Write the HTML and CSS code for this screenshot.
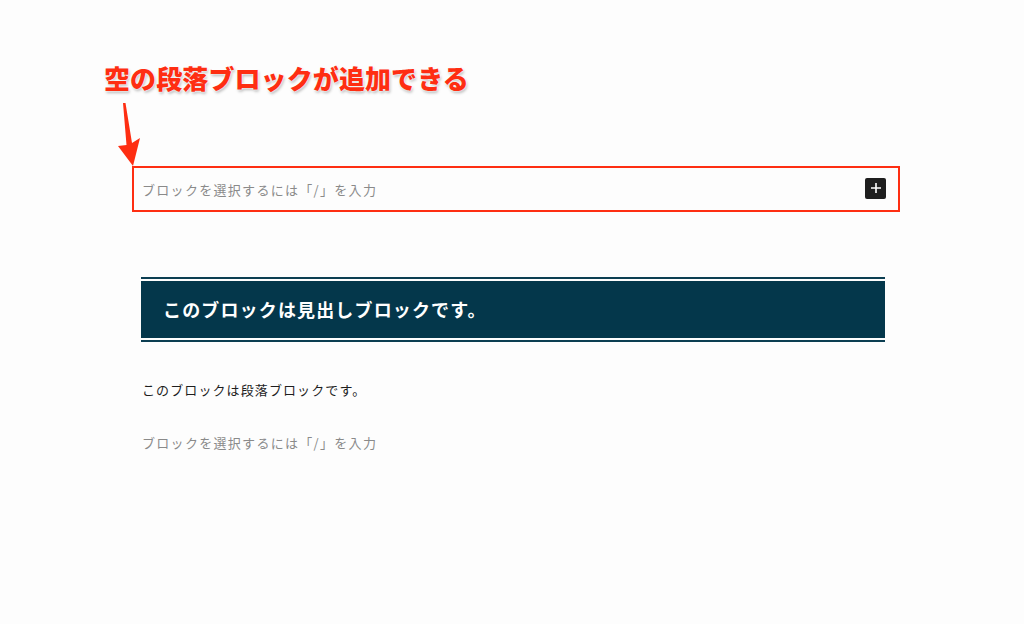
FILE: index.html
```html
<!DOCTYPE html>
<html lang="ja">
<head>
<meta charset="utf-8">
<link rel="stylesheet" href="styles.css">
</head>
<body>
<div class="page">
  <div class="note">空の段落ブロックが追加できる</div>
  <svg class="arrow" width="40" height="80" viewBox="0 0 40 80">
    <path d="M5 2 L7.5 2 L14 42 L22 37 L15 65 L0 45 L8.5 44 Z" fill="#fe2e12"/>
  </svg>
  <div class="new-block">
    <span class="placeholder">ブロックを選択するには「/」を入力</span>
    <span class="add-btn">
      <svg width="12" height="12" viewBox="0 0 12 12"><path d="M6 1v10M1 6h10" stroke="#fff" stroke-width="1.6"/></svg>
    </span>
  </div>
  <div class="heading-wrap">
    <h2 class="heading">このブロックは見出しブロックです。</h2>
  </div>
  <p class="para">このブロックは段落ブロックです。</p>
  <p class="placeholder para2">ブロックを選択するには「/」を入力</p>
</div>
</body>
</html>
```
FILE: styles.css
```css
html, body {
  margin: 0;
  padding: 0;
  background: #fdfdfd;
}
body {
  width: 1024px;
  height: 624px;
  overflow: hidden;
  font-family: "Noto Sans CJK JP", "Noto Sans", sans-serif;
}
.page {
  position: relative;
  display: flex;
  flex-direction: column;
  align-items: flex-start;
  padding-top: 62px;
}
.note {
  margin-left: 104px;
  font-size: 26px;
  line-height: 32px;
  font-weight: 900;
  color: #fe2e12;
  letter-spacing: 0.1px;
  text-shadow: 0 0 2px #fff, 0 0 2px #fff, 1px 2px 3px rgba(0,0,0,0.28);
}
.arrow {
  position: absolute;
  left: 118px;
  top: 101px;
}
.new-block {
  box-sizing: border-box;
  margin-top: 72px;
  margin-left: 132px;
  width: 768px;
  height: 46px;
  border: 2px solid #fe2e12;
  display: flex;
  align-items: center;
  justify-content: space-between;
  padding: 0 12px 0 8px;
}
.placeholder {
  font-size: 13px;
  color: #8a8a8a;
  letter-spacing: 1.3px;
}
.add-btn {
  width: 21px;
  height: 21px;
  border-radius: 2px;
  background: #1e1e1e;
  display: flex;
  align-items: center;
  justify-content: center;
  margin-top: -2px;
}
.add-btn svg { display: block; }
.heading-wrap {
  margin-top: 65px;
  margin-left: 141px;
  width: 744px;
  border-top: 2px solid #0b3e52;
  border-bottom: 2px solid #0b3e52;
  padding: 2px 0;
}
.heading {
  margin: 0;
  height: 57px;
  background: #04374b;
  color: #fff;
  font-size: 18px;
  font-weight: 700;
  letter-spacing: 1.15px;
  line-height: 57px;
  padding-left: 22px;
}
.para {
  margin: 38px 0 0 142px;
  font-size: 13px;
  line-height: 20px;
  color: #1e1e1e;
  letter-spacing: 1.1px;
}
.para2 {
  margin: 33px 0 0 142px;
  line-height: 20px;
}
```
